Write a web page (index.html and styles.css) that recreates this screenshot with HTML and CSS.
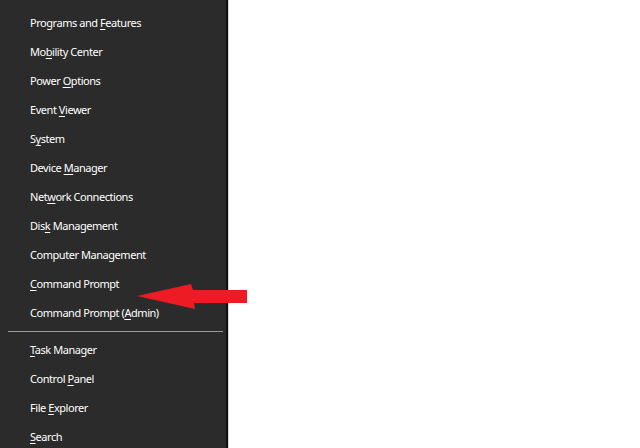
FILE: index.html
```html
<!DOCTYPE html>
<html>
<head>
<meta charset="utf-8">
<link rel="stylesheet" href="styles.css">
</head>
<body>
<div class="menu">
  <div class="group">
    <div class="item">Programs and <u>F</u>eatures</div>
    <div class="item">Mo<u>b</u>ility Center</div>
    <div class="item">Power <u>O</u>ptions</div>
    <div class="item">Event <u>V</u>iewer</div>
    <div class="item">S<u>y</u>stem</div>
    <div class="item">Device <u>M</u>anager</div>
    <div class="item">Net<u>w</u>ork Connections</div>
    <div class="item">Dis<u>k</u> Management</div>
    <div class="item">Computer Management</div>
    <div class="item"><u>C</u>ommand Prompt</div>
    <div class="item">Command Prompt (<u>A</u>dmin)</div>
  </div>
  <div class="sep"></div>
  <div class="group">
    <div class="item"><u>T</u>ask Manager</div>
    <div class="item">Control <u>P</u>anel</div>
    <div class="item">File <u>E</u>xplorer</div>
    <div class="item"><u>S</u>earch</div>
  </div>
</div>
<svg class="arrow" width="120" height="40" viewBox="0 0 120 40">
  <polygon points="0,16 54,4 56,10 110,10 110,23 57,23 58,29" fill="#ed1c24"/>
</svg>
</body>
</html>
```
FILE: styles.css
```css
html, body {
  margin: 0;
  padding: 0;
  background: #ffffff;
}
body {
  width: 640px;
  height: 448px;
  overflow: hidden;
  position: relative;
  font-family: "Noto Sans", "Open Sans", sans-serif;
}
.menu {
  width: 228px;
  height: 448px;
  background: #2b2b2b;
  border-right: 2px solid #111111;
  box-shadow: 1px 0 0 #d6d6d6;
  padding-top: 8px;
  box-sizing: border-box;
}
.item {
  height: 29px;
  line-height: 29px;
  padding-left: 30px;
  color: #ffffff;
  font-size: 11px;
  letter-spacing: -0.45px;
  white-space: nowrap;
}
.item u {
  text-decoration: underline;
  text-underline-offset: 2px;
}
.sep {
  height: 1px;
  background: #9a9a9a;
  margin: 4px 3px 3px 8px;
}
.arrow {
  position: absolute;
  left: 137px;
  top: 280px;
}
```
